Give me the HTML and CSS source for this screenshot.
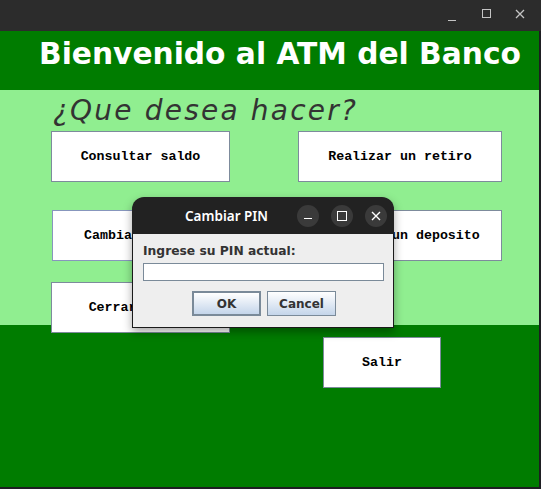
FILE: index.html
```html
<!DOCTYPE html>
<html lang="es">
<head>
<meta charset="utf-8">
<title>ATM</title>
<link rel="stylesheet" href="styles.css">
</head>
<body>
<div class="screen">
  <div class="titlebar">
    <span class="ctl ctl-min"></span>
    <span class="ctl ctl-max"></span>
    <svg class="ctl-close" width="10" height="10" viewBox="0 0 10 10"><path d="M1 1L9 9M9 1L1 9" stroke="#c4c4c4" stroke-width="1.3"/></svg>
  </div>
  <div class="window">
    <div class="header"><h1 class="title">Bienvenido al ATM del Banco</h1></div>
    <div class="panel">
      <p class="subtitle">¿Que desea hacer?</p>
      <div class="row row1">
        <button class="btn w179">Consultar saldo</button>
        <button class="btn w204">Realizar un retiro</button>
      </div>
      <div class="row row2">
        <button class="btn w152 focus">Cambiar PIN</button>
        <button class="btn w204 right">Realizar un deposito</button>
      </div>
      <div class="row row3">
        <button class="btn w179">Cerrar sesion</button>
      </div>
    </div>
    <div class="footer">
      <button class="btn salir">Salir</button>
    </div>
  </div>

  <div class="dialog">
    <div class="dlg-bar">
      <span class="dlg-title">Cambiar PIN</span>
      <div class="dlg-ctls">
        <span class="circ"><span class="i-min"></span></span>
        <span class="circ"><span class="i-max"></span></span>
        <span class="circ"><svg width="10" height="10" viewBox="0 0 10 10"><path d="M1 1L9 9M9 1L1 9" stroke="#ffffff" stroke-width="1.4"/></svg></span>
      </div>
    </div>
    <div class="dlg-body">
      <label class="dlg-label">Ingrese su PIN actual:</label>
      <div class="field"></div>
      <div class="dlg-buttons">
        <button class="jbtn ok">OK</button>
        <button class="jbtn">Cancel</button>
      </div>
    </div>
  </div>
</div>
</body>
</html>
```
FILE: styles.css
```css
* { box-sizing: border-box; }
html, body { margin: 0; padding: 0; }
body {
  background: #1e1e22;
  width: 541px;
  height: 489px;
  overflow: hidden;
  font-family: "DejaVu Sans", sans-serif;
}
.screen { position: relative; width: 541px; height: 489px; }

.titlebar {
  height: 31px;
  background: #2c2c2c;
  display: flex;
  align-items: center;
  justify-content: flex-end;
  padding-right: 16px;
}
.ctl { display: block; }
.ctl-min { width: 8px; height: 1px; background: #c4c4c4; margin-top: 10px; margin-right: 26px; }
.ctl-max { width: 9px; height: 9px; border: 1px solid #c4c4c4; margin-top: -4px; margin-right: 24px; }
.ctl-close { display: block; margin-top: -4px; }

.window { width: 539px; height: 456px; display: flex; flex-direction: column; }
.header {
  height: 59px;
  background: #007c00;
  padding-left: 39px;
  padding-top: 4px;
}
.title {
  margin: 0;
  color: #ffffff;
  font-family: "DejaVu Sans", sans-serif;
  font-weight: bold;
  font-size: 29.7px;
  line-height: 38px;
  white-space: nowrap;
}
.panel {
  height: 235px;
  background: #90ee90;
  padding-top: 2px;
}
.subtitle {
  margin: 0 0 0 53px;
  font-family: "DejaVu Sans", sans-serif;
  font-style: italic;
  font-weight: normal;
  font-size: 28px;
  line-height: 38px;
  letter-spacing: 2.2px;
  color: #333333;
  white-space: nowrap;
}
.row { display: flex; padding-left: 51px; gap: 68px; }
.row1 { margin-top: 1px; }
.row2 { margin-top: 28px; padding-left: 52px; }
.row3 { margin-top: 21px; }
.btn {
  position: relative;
  height: 51px;
  background: #ffffff;
  border: 1px solid #7d8b9c;
  border-radius: 0;
  font-family: "Liberation Mono", monospace;
  font-weight: bold;
  font-size: 13.3px;
  color: #000000;
  padding: 0;
  margin: 0;
}
.w179 { width: 179px; }
.w204 { width: 204px; }
.w152 { width: 152px; }
.right { margin-left: auto; margin-right: 37px; }
.focus { border-color: #8796bd; }
.footer { flex: 1; background: #007c00; padding-top: 12px; padding-left: 323px; }
.salir { width: 118px; }

.dialog {
  position: absolute;
  left: 132px;
  top: 197px;
  width: 262px;
  height: 131px;
  border-radius: 12px 12px 0 0;
  box-shadow: 0 4px 10px rgba(0,0,0,0.35);
  display: flex;
  flex-direction: column;
}
.dlg-bar {
  height: 37px;
  background: #222222;
  border-radius: 12px 12px 0 0;
  display: flex;
  align-items: center;
}
.dlg-title {
  color: #ffffff;
  font-family: "Noto Sans", sans-serif;
  font-weight: 600;
  font-size: 13.5px;
  margin-left: 53px;
}
.dlg-ctls { display: flex; gap: 12px; margin-left: auto; margin-right: 7px; }
.circ {
  width: 22px; height: 22px; border-radius: 50%;
  background: #3a3a3a;
  display: flex; align-items: center; justify-content: center;
}
.i-min { width: 8px; height: 1.5px; background: #ffffff; margin-top: 6px; }
.i-max { width: 10px; height: 10px; border: 1.5px solid #ffffff; }
.dlg-body {
  flex: 1;
  background: #eeeeee;
  border: 1px solid #1a1a1a;
  border-top: none;
  padding: 10px 10px 0 10px;
}
.dlg-label {
  display: block;
  font-family: "DejaVu Sans", sans-serif;
  font-weight: bold;
  font-size: 12.3px;
  color: #333333;
  line-height: 15px;
}
.field {
  margin-top: 4px;
  width: 241px;
  height: 18px;
  background: #ffffff;
  border: 1px solid #7a8a99;
}
.dlg-buttons { display: flex; justify-content: center; gap: 6px; margin-top: 10px; padding-left: 2px; }
.jbtn {
  height: 25px;
  width: 69px;
  background: linear-gradient(#ffffff, #c4d5ea);
  border: 1px solid #7a8a99;
  font-family: "DejaVu Sans", sans-serif;
  font-weight: bold;
  font-size: 12px;
  color: #333333;
  padding: 0;
}
.jbtn.ok { border: 2px solid #7a8a99; }
```
